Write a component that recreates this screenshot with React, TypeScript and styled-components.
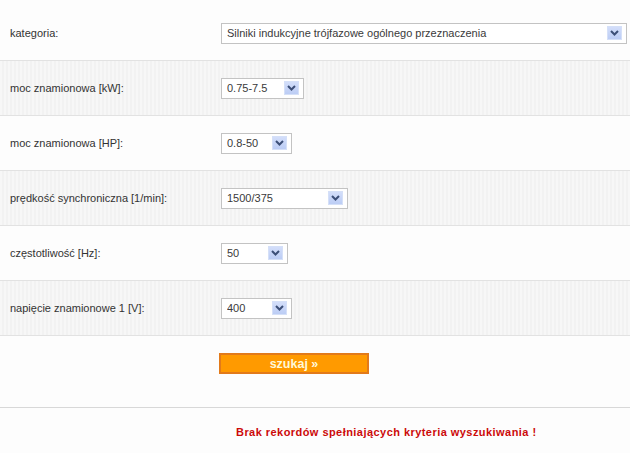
import React from "react";
import styled, { createGlobalStyle } from "styled-components";

const GlobalStyle = createGlobalStyle`
  html, body {
    margin: 0;
    padding: 0;
    background: #fdfdfd;
  }
  body {
    font-family: Tahoma, "Liberation Sans", Arial, sans-serif;
    font-size: 11px;
    color: #333333;
  }
`;

const Page = styled.div`
  width: 630px;
  display: flex;
  flex-direction: column;
`;

const FieldRow = styled.div<{ $shaded?: boolean; $first?: boolean }>`
  display: flex;
  align-items: center;
  height: 54px;
  padding-top: ${(p) => (p.$first ? 6 : 0)}px;
  border-bottom: 1px solid #e2e2e2;
  background-color: ${(p) => (p.$shaded ? "#f4f4f4" : "#fdfdfd")};
  background-image: ${(p) =>
    p.$shaded
      ? "repeating-linear-gradient(90deg, #f7f7f7 0px, #f7f7f7 2px, #f2f2f2 2px, #f2f2f2 4px)"
      : "none"};
`;

const Label = styled.div`
  width: 221px;
  padding-left: 10px;
  box-sizing: border-box;
  font-size: 11px;
  color: #333333;
`;

const SelectBox = styled.div<{ $width: number }>`
  width: ${(p) => p.$width}px;
  height: 21px;
  box-sizing: border-box;
  border: 1px solid #c3c3c3;
  background: #ffffff;
  display: flex;
  align-items: center;
  padding-left: 5px;
  font-size: 11px;
  color: #3a3a3a;
`;

const SelectText = styled.span`
  flex: 1;
  white-space: nowrap;
  overflow: hidden;
`;

const ArrowButton = styled.span`
  width: 15px;
  height: 14px;
  margin-right: 4px;
  box-sizing: border-box;
  border: 1px solid #d5e0f8;
  background: linear-gradient(180deg, #d3defa 0%, #bccdf5 100%);
  display: flex;
  align-items: center;
  justify-content: center;
`;

const ButtonArea = styled.div`
  height: 72px;
  box-sizing: border-box;
  display: flex;
  align-items: flex-start;
  padding: 17px 0 0 219px;
  border-bottom: 1px solid #d8d8d8;
`;

const SearchButton = styled.button`
  width: 150px;
  height: 21px;
  background: #ff9a00;
  border: 2px solid #e27a1a;
  color: #fff8d8;
  font-family: Tahoma, "Liberation Sans", Arial, sans-serif;
  font-weight: bold;
  font-size: 12.5px;
  padding: 0;
  cursor: pointer;
  line-height: 16px;
`;

const Message = styled.div`
  height: 48px;
  display: flex;
  align-items: center;
  padding-left: 236px;
  color: #cc0a0a;
  font-weight: bold;
  font-size: 11px;
  letter-spacing: 0.45px;
`;

function Chevron() {
  return (
    <svg width="9" height="6" viewBox="0 0 9 6">
      <path d="M1 1 L4.5 4.5 L8 1" fill="none" stroke="#3c4f78" strokeWidth="2" />
    </svg>
  );
}

function Select({ value, width }: { value: string; width: number }) {
  return (
    <SelectBox $width={width}>
      <SelectText>{value}</SelectText>
      <ArrowButton>
        <Chevron />
      </ArrowButton>
    </SelectBox>
  );
}

const fields = [
  { label: "kategoria:", value: "Silniki indukcyjne trójfazowe ogólnego przeznaczenia", width: 406 },
  { label: "moc znamionowa [kW]:", value: "0.75-7.5", width: 83 },
  { label: "moc znamionowa [HP]:", value: "0.8-50", width: 71 },
  { label: "prędkość synchroniczna [1/min]:", value: "1500/375", width: 127 },
  { label: "częstotliwość [Hz]:", value: "50", width: 67 },
  { label: "napięcie znamionowe 1 [V]:", value: "400", width: 71 },
];

export default function App() {
  return (
    <>
      <GlobalStyle />
      <Page>
        {fields.map((f, i) => (
          <FieldRow key={f.label} $shaded={i % 2 === 1} $first={i === 0}>
            <Label>{f.label}</Label>
            <Select value={f.value} width={f.width} />
          </FieldRow>
        ))}
        <ButtonArea>
          <SearchButton>szukaj »</SearchButton>
        </ButtonArea>
        <Message>Brak rekordów spełniających kryteria wyszukiwania !</Message>
      </Page>
    </>
  );
}
